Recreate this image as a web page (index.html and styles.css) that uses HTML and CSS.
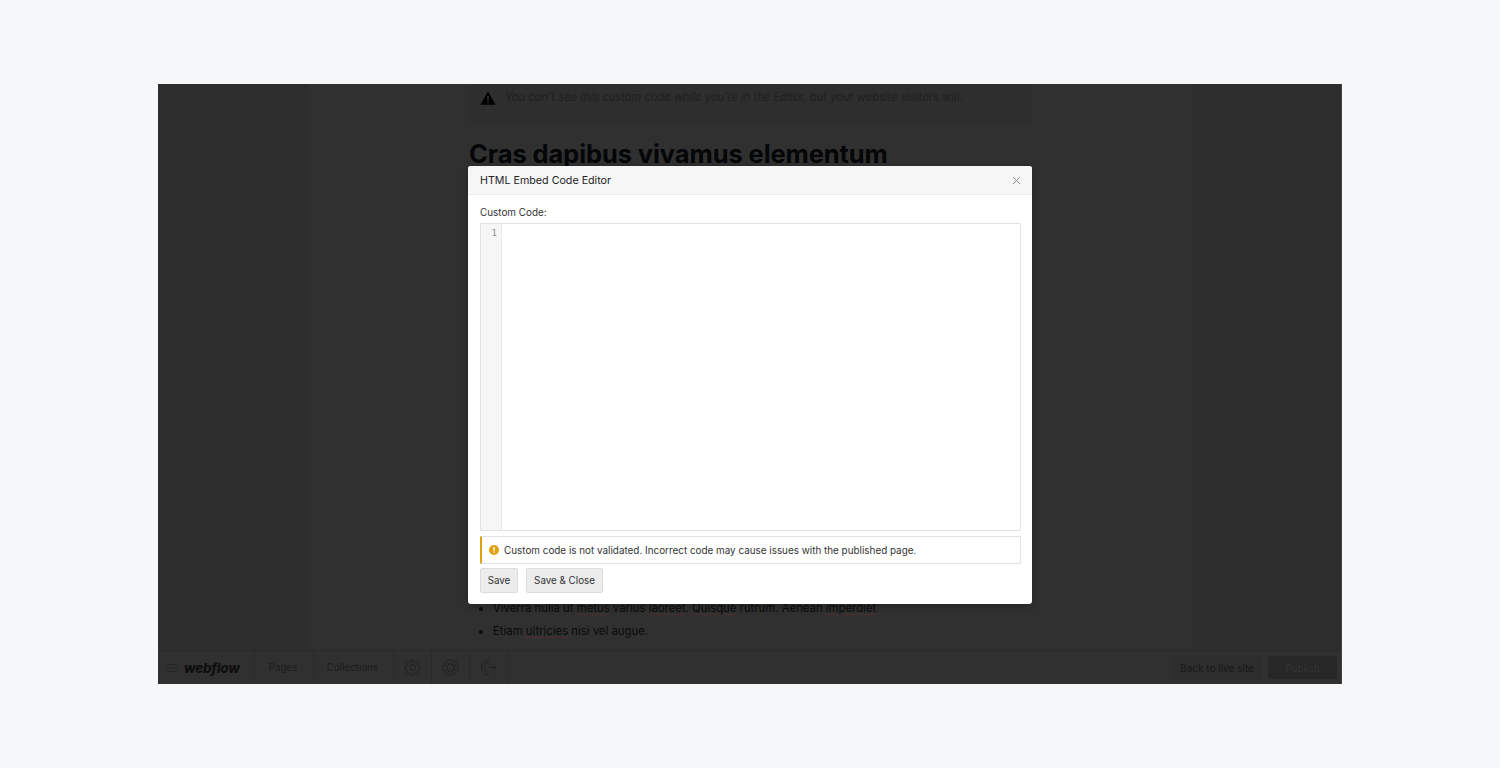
FILE: index.html
```html
<!DOCTYPE html>
<html lang="en">
<head>
<meta charset="utf-8">
<title>HTML Embed Code Editor</title>
<link rel="stylesheet" href="styles.css">
</head>
<body>
<div class="frame">
  <div class="stage">
    <div class="gutter"></div>
    <main class="page">
      <div class="notice">
        <svg class="warn" viewBox="0 0 16 14" width="16" height="14"><path d="M8 0.5 L15.6 13.8 H0.4 Z" fill="#000"/><rect x="7.2" y="4.8" width="1.6" height="4.6" fill="#303030"/><rect x="7.2" y="10.4" width="1.6" height="1.6" fill="#303030"/></svg>
        <span>You can't see this custom code while you're in the Editor, but your website visitors will.</span>
      </div>
      <h1 class="title">Cras dapibus vivamus elementum</h1>
      <ul class="list">
        <li>Viverra nulla ut <span class="sp">metus</span> varius <span class="sp">laoreet</span>. <span class="sp">Quisque</span> rutrum. Aenean <span class="sp">imperdiet</span></li>
        <li>Etiam <span class="sp">ultricies</span> nisi vel augue.</li>
      </ul>
    </main>
    <div class="gutter"></div>
  </div>
  <footer class="bar">
    <div class="cell brand">
      <svg class="burger" viewBox="0 0 10 10" width="10" height="10"><path d="M0 1.5H10M0 5H10M0 8.5H10" stroke="#242424" stroke-width="1.2"/></svg>
      <span class="logo">webflow</span>
    </div>
    <div class="cell link pages">Pages</div>
    <div class="cell link coll">Collections</div>
    <div class="cell icon">
      <svg viewBox="0 0 20 20" width="17" height="17" fill="none" stroke="#202020" stroke-width="1.1"><circle cx="10" cy="10" r="3.4"/><path d="M8.6 1h2.8l.5 2.6 1.5.6 2.2-1.5 2 2-1.5 2.2.6 1.5 2.6.5v2.8l-2.6.5-.6 1.5 1.5 2.2-2 2-2.2-1.5-1.5.6-.5 2.6H8.600l-.5-2.6-1.5-.6-2.2 1.5-2-2 1.5-2.2-.6-1.5-2.6-.5V9.200l2.600-.5.6-1.500-1.500-2.200 2-2 2.200 1.500 1.500-.6z"/></svg>
    </div>
    <div class="cell icon">
      <svg viewBox="0 0 20 20" width="17" height="17" fill="none" stroke="#202020" stroke-width="1.1"><circle cx="10" cy="10" r="9"/><circle cx="10" cy="10" r="4.2"/><path d="M7 3.500L7.800 6.300M13 3.500l-.8 2.800M3.500 7l2.800.8M3.500 13l2.800-.8M16.500 7l-2.800.8M16.500 13l-2.800-.8M7 16.500l.8-2.800M13 16.500l-.8-2.800"/></svg>
    </div>
    <div class="cell icon">
      <svg viewBox="0 0 20 20" width="17" height="17" fill="none" stroke="#202020" stroke-width="1.1"><path d="M10.500 1A9 9 0 1 0 10.500 19M10.500 4.500A5.500 5.500 0 1 0 10.500 15.500"/><path d="M9 10H19M15 6.500L19 10l-4 3.500"/></svg>
    </div>
    <div class="actions">
      <button class="btn-dark back">Back to live site</button>
      <button class="btn-dark publish">Publish</button>
    </div>
  </footer>
  <section class="modal">
    <header class="modal-head">
      <span>HTML Embed Code Editor</span>
      <svg class="close" viewBox="0 0 9 9" width="9" height="9"><path d="M1 1L8 8M8 1L1 8" stroke="#8a8a8a" stroke-width="1"/></svg>
    </header>
    <div class="modal-body">
      <label class="field-label">Custom Code:</label>
      <div class="editor">
        <div class="numbers">1</div>
        <div class="code"></div>
      </div>
      <div class="alert">
        <svg viewBox="0 0 10 10" width="10" height="10"><circle cx="5" cy="5" r="5" fill="#e0a010"/><rect x="4.300" y="2" width="1.400" height="3.600" fill="#fff"/><rect x="4.300" y="6.400" width="1.400" height="1.500" fill="#fff"/></svg>
        <span>Custom code is not validated. Incorrect code may cause issues with the published page.</span>
      </div>
      <div class="buttons">
        <button class="btn save">Save</button>
        <button class="btn close-btn">Save &amp; Close</button>
      </div>
    </div>
  </section>
</div>
</body>
</html>
```

FILE: styles.css
```css
* { box-sizing: border-box; }
html, body { height: 100%; }
body {
  margin: 0;
  background: #f6f7f9;
  display: flex;
  justify-content: center;
  padding-top: 84px;
  font-family: Inter, "Liberation Sans", sans-serif;
}
.frame {
  position: relative;
  width: 1184px;
  height: 600px;
  display: flex;
  flex-direction: column;
  background: #303030;
  border-right: 1px solid #424242;
  overflow: hidden;
}
.stage {
  flex: 1;
  min-height: 0;
  display: grid;
  grid-template-columns: 150px 1fr 149px;
}
.gutter { background: #2d2d2e; }
.page {
  padding: 0 160px;
  display: flex;
  flex-direction: column;
  min-height: 0;
}
.notice {
  height: 40px;
  background: #2e2e2e;
  padding: 6px 12px 0;
  display: flex;
  align-items: flex-start;
  gap: 8px;
  font-size: 11.2px;
  font-style: italic;
  line-height: 14px;
  color: #202020;
  flex: none;
}
.warn { flex: none; margin-top: 1px; margin-right: 1px; }
.title {
  margin: 14px 0 0 1px;
  font-size: 25.5px;
  line-height: 32px;
  font-weight: 700;
  color: #050608;
  letter-spacing: -0.1px;
  white-space: nowrap;
  flex: none;
}
.list {
  margin: auto 0 0;
  padding: 0 0 11px 25px;
  list-style: disc;
  font-size: 11.35px;
  line-height: 15px;
  color: #0a0a0a;
}
.list li { margin-top: 8px; }
.sp { text-decoration: underline dotted #6a2c2c 1px; text-underline-offset: 2px; }
.bar {
  flex: none;
  height: 34px;
  border-top: 1px solid #2a2a2a;
  background: #303030;
  display: flex;
  align-items: stretch;
  color: #1c1c1c;
  font-size: 10px;
}
.cell {
  border-right: 1px solid #2a2a2a;
  display: flex;
  align-items: center;
  justify-content: center;
}
.brand { width: 97px; justify-content: flex-start; padding-left: 9px; gap: 7px; }
.logo { font-size: 13.4px; font-weight: 800; font-style: italic; color: #0e0e0e; letter-spacing: -0.2px; }
.link { font-size: 9.8px; padding-right: 2px; }
.pages { width: 59px; }
.coll { width: 80px; }
.icon { width: 38px; }
.actions {
  margin-left: auto;
  display: flex;
  align-items: center;
  gap: 6px;
  padding-right: 4px;
}
.btn-dark {
  height: 23px;
  border: 0;
  border-radius: 2px;
  padding: 0;
  font: inherit;
}
.back { width: 90px; background: #2d2d2d; color: #181818; }
.publish { width: 69px; background: #272727; color: #343434; }
.modal {
  position: absolute;
  left: 310px;
  top: 82px;
  width: 564px;
  height: 438px;
  background: #fff;
  border-radius: 3px;
  overflow: hidden;
  box-shadow: 0 2px 8px rgba(0, 0, 0, 0.25);
  color: #333;
}
.modal-head {
  height: 29px;
  background: #f6f6f6;
  border-bottom: 1px solid #ececec;
  display: flex;
  align-items: center;
  justify-content: space-between;
  padding: 0 11px 0 12px;
  font-size: 10.7px;
  font-weight: 400;
  color: #222;
}
.modal-body { padding: 11px 11px 0 12px; }
.field-label {
  display: block;
  font-size: 9.9px;
  line-height: 13px;
  color: #333;
  margin-bottom: 4px;
}
.editor {
  height: 308px;
  border: 1px solid #e2e2e2;
  display: flex;
  border-radius: 1px;
}
.numbers {
  width: 21px;
  background: #f6f6f6;
  border-right: 1px solid #ececec;
  font-family: "DejaVu Sans Mono", monospace;
  font-size: 9px;
  line-height: 19px;
  color: #909090;
  text-align: right;
  padding-right: 4px;
}
.code { flex: 1; }
.alert {
  margin-top: 5px;
  height: 28px;
  border: 1px solid #e2e2e2;
  border-left: 2px solid #e0a010;
  display: flex;
  align-items: center;
  gap: 5px;
  padding-left: 7px;
  font-size: 9.9px;
  color: #333;
  border-radius: 1px;
}
.buttons {
  margin-top: 4px;
  display: flex;
  gap: 8px;
}
.btn {
  height: 25px;
  padding: 0;
  border: 1px solid #dcdcdc;
  border-radius: 2px;
  background: #ececec;
  font: inherit;
  font-size: 9.8px;
  color: #333;
}
.save { width: 38px; }
.close-btn { width: 77px; }
```
